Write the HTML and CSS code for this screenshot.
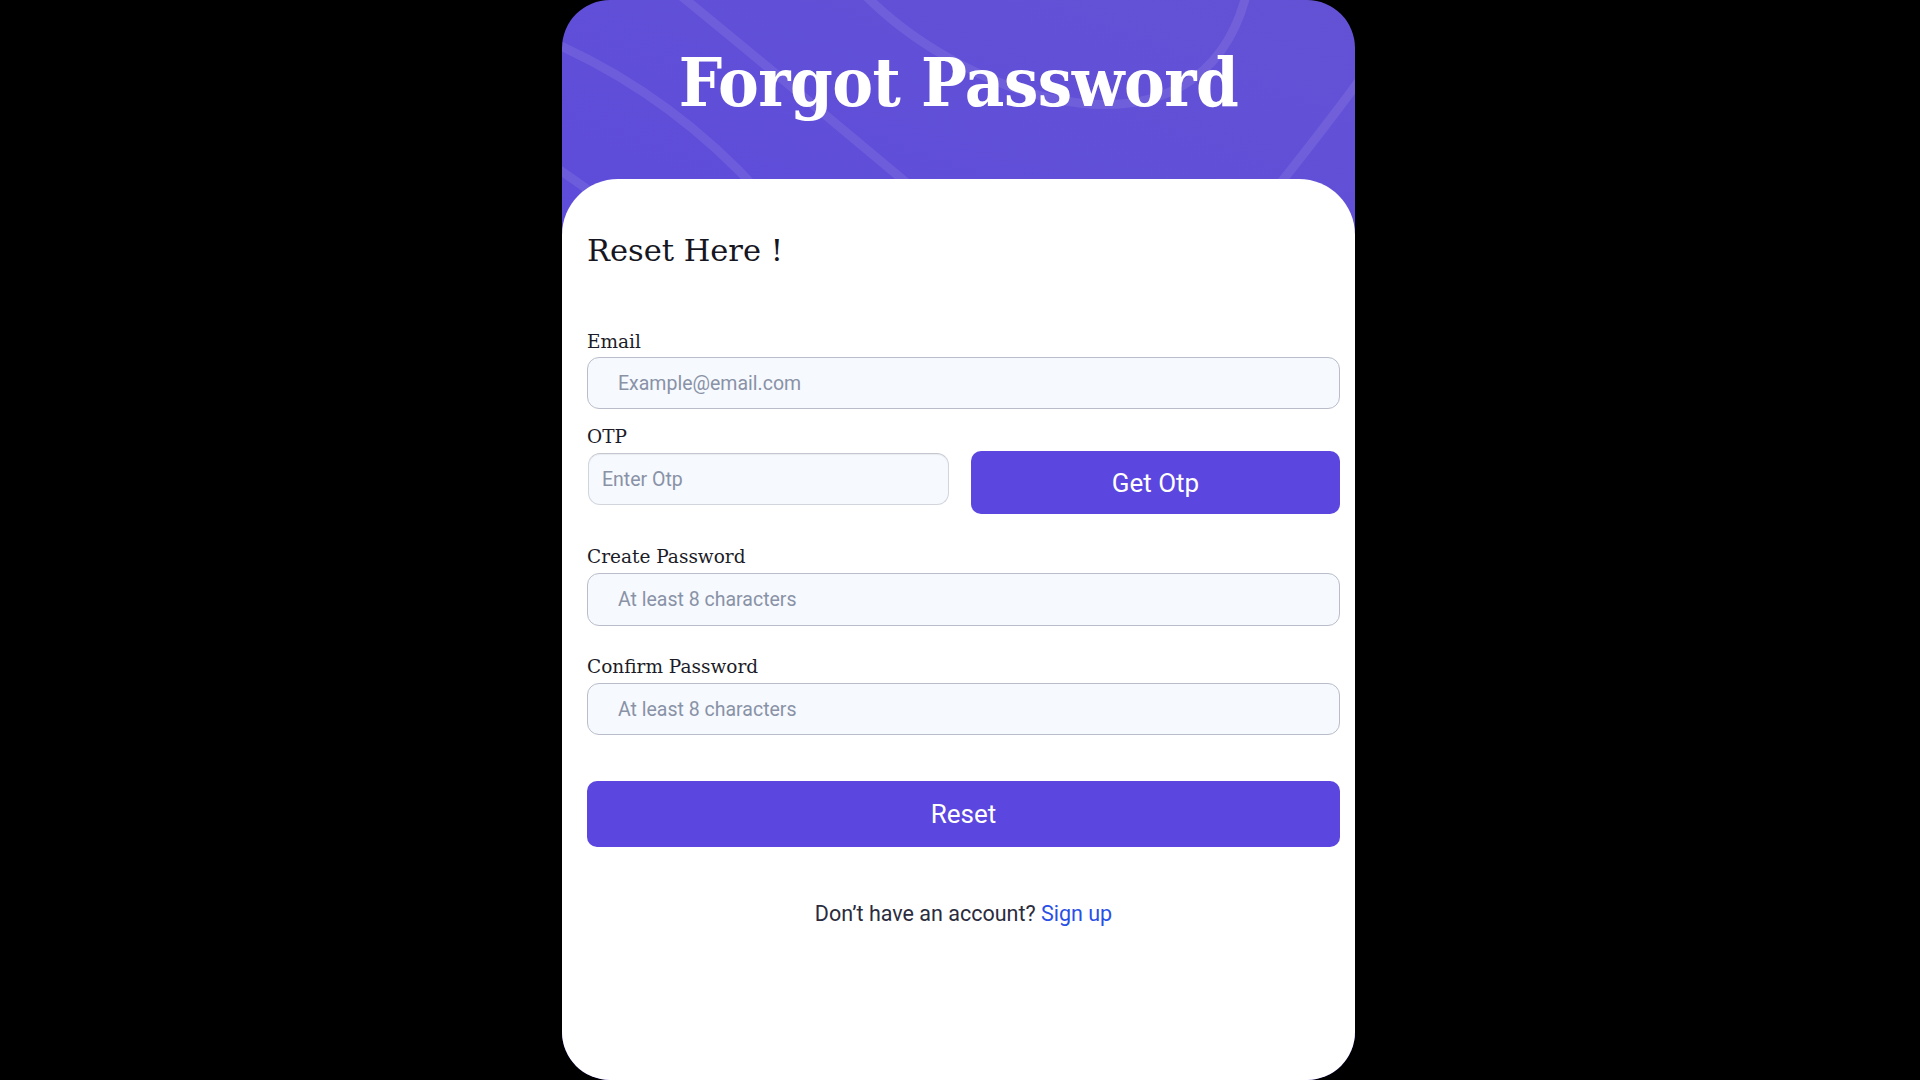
FILE: index.html
```html
<!DOCTYPE html>
<html lang="en">
<head>
<meta charset="utf-8">
<title>Forgot Password</title>
<link rel="stylesheet" href="styles.css">
</head>
<body>
<div class="card">
  <svg class="deco" width="793" height="260" viewBox="0 0 793 260" aria-hidden="true">
    <g fill="none" stroke="rgba(255,255,255,0.09)" stroke-width="9">
      <path d="M118 -5 Q210 70 365 200"/>
      <path d="M-10 42 Q110 95 200 195"/>
      <path d="M-10 165 Q10 178 40 200"/>
      <path d="M300 -8 C410 105 640 175 685 -8"/>
      <path d="M805 70 Q765 125 705 200"/>
    </g>
  </svg>
  <header class="hero">
    <h1 class="title">Forgot Password</h1>
  </header>
  <main class="panel">
    <h2 class="heading">Reset Here !</h2>
    <form class="form">
      <label class="label label-email" for="email">Email</label>
      <input class="field field-email" id="email" type="email" placeholder="Example@email.com">
      <label class="label label-otp" for="otp">OTP</label>
      <div class="otp-row">
        <input class="field field-otp" id="otp" type="text" placeholder="Enter Otp">
        <button class="btn btn-otp" type="button">Get Otp</button>
      </div>
      <label class="label label-create" for="pw1">Create Password</label>
      <input class="field field-create" id="pw1" type="password" placeholder="At least 8 characters">
      <label class="label label-confirm" for="pw2">Confirm Password</label>
      <input class="field field-confirm" id="pw2" type="password" placeholder="At least 8 characters">
      <button class="btn btn-reset" type="button">Reset</button>
    </form>
    <p class="footer">Don’t have an account? <a class="link" href="#">Sign up</a></p>
  </main>
</div>
</body>
</html>
```

FILE: styles.css
```css
* { box-sizing: border-box; }

html, body {
  margin: 0;
  padding: 0;
  background: #000;
}

body {
  display: flex;
  justify-content: center;
  height: 1080px;
  padding-right: 3px;
  overflow: hidden;
}

.card {
  position: relative;
  width: 793px;
  height: 1080px;
  border-radius: 48px;
  overflow: hidden;
  background: linear-gradient(200deg, #6452d5 0%, #5c4bdb 45%, #5947df 100%);
  display: flex;
  flex-direction: column;
}

.deco {
  position: absolute;
  top: 0;
  left: 0;
}

.hero {
  position: relative;
  z-index: 1;
  height: 179px;
  padding-top: 48px;
  text-align: center;
}

.title {
  margin: 0;
  color: #fff;
  font-family: "DejaVu Serif Condensed", "DejaVu Serif", serif;
  font-stretch: condensed;
  font-weight: bold;
  font-size: 68px;
  line-height: 68px;
  letter-spacing: -0.5px;
}

.panel {
  position: relative;
  z-index: 1;
  flex: 1;
  background: #fff;
  border-radius: 56px 56px 0 0;
  padding: 56px 15px 0 25px;
}

.heading {
  margin: 0;
  font-family: "DejaVu Serif", serif;
  font-weight: normal;
  font-size: 30.5px;
  line-height: 31px;
  color: #161622;
}

.form {
  display: flex;
  flex-direction: column;
}

.label {
  display: block;
  font-family: "DejaVu Serif", serif;
  font-size: 18.5px;
  line-height: 18px;
  color: #1c1c28;
}

.label-email { margin-top: 67px; }
.label-otp { margin-top: 19px; }
.label-create { margin-top: 34px; }
.label-confirm { margin-top: 32px; }

.field {
  display: block;
  width: 100%;
  height: 52px;
  margin-top: 6px;
  padding: 0 16px 0 30px;
  border: 1px solid #b9bdc9;
  border-radius: 12px;
  background: #f6f9fe;
  font-family: Roboto, "Noto Sans", sans-serif;
  font-size: 19.5px;
  color: #1c1c28;
  outline: none;
}

.field::placeholder {
  color: #8992a6;
}

.field-create { height: 53px; margin-top: 7px; }
.field-confirm { margin-top: 7px; }

.otp-row {
  display: flex;
  align-items: flex-start;
  gap: 22px;
  margin-top: 5px;
}

.field-otp {
  width: 361px;
  flex: none;
  margin-top: 2px;
  margin-left: 1px;
  padding-left: 13px;
  border-color: #d2d5dd;
  border-top-color: #c4c7cf;
  box-shadow: inset 0 1px 1px rgba(0, 0, 0, 0.06);
}

.btn {
  display: block;
  border: none;
  border-radius: 10px;
  background: #5b46df;
  color: #fff;
  font-family: Roboto, "Noto Sans", sans-serif;
  font-size: 26px;
  cursor: pointer;
}

.btn-otp {
  flex: 1;
  height: 63px;
}

.btn-reset {
  width: 100%;
  height: 66px;
  margin-top: 46px;
}

.footer {
  margin: 56px 0 0;
  text-align: center;
  font-family: Roboto, "Noto Sans", sans-serif;
  font-size: 21.5px;
  line-height: 21px;
  color: #2b2c3e;
}

.link {
  color: #2a4fe6;
  text-decoration: none;
}
```
